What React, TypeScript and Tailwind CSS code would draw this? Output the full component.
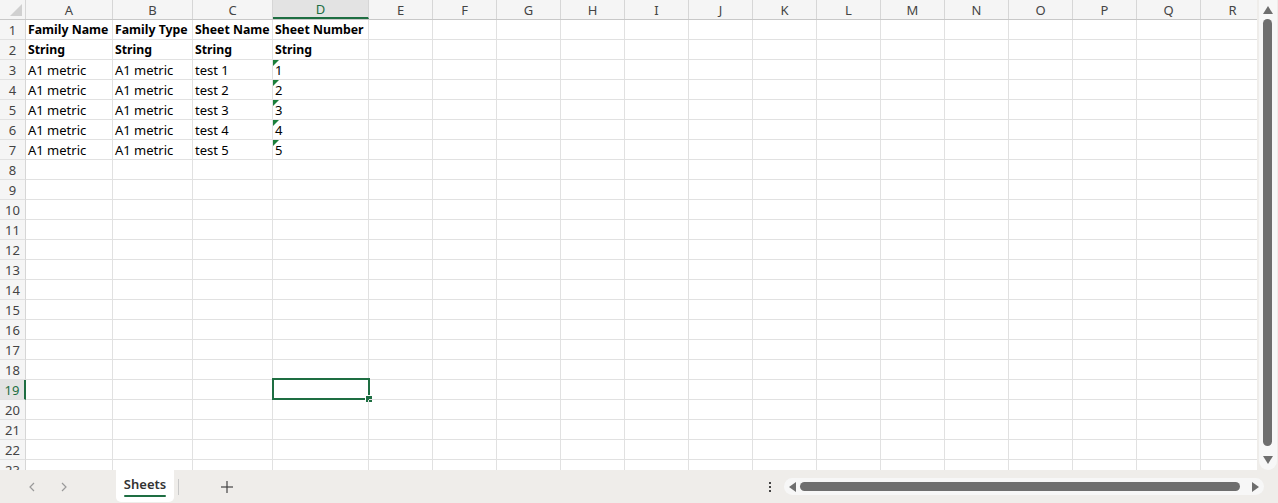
import React from 'react'

const cols = [
  { key: 'A', w: 'w-[87px]' },
  { key: 'B', w: 'w-[80px]' },
  { key: 'C', w: 'w-[80px]' },
  { key: 'D', w: 'w-[96px]' },
  ...'EFGHIJKLMNOPQR'.split('').map((k) => ({ key: k, w: 'w-[64px]' })),
]

const data: Record<number, string[]> = {
  1: ['Family Name', 'Family Type', 'Sheet Name', 'Sheet Number'],
  2: ['String', 'String', 'String', 'String'],
  3: ['A1 metric', 'A1 metric', 'test 1', '1'],
  4: ['A1 metric', 'A1 metric', 'test 2', '2'],
  5: ['A1 metric', 'A1 metric', 'test 3', '3'],
  6: ['A1 metric', 'A1 metric', 'test 4', '4'],
  7: ['A1 metric', 'A1 metric', 'test 5', '5'],
}

const rows = Array.from({ length: 23 }, (_, i) => i + 1)

function HeaderRow() {
  return (
    <div className="flex h-[20px] shrink-0 bg-[#f5f5f5] border-b border-[#c8c8c8]">
      <div className="relative w-[26px] shrink-0 border-r border-[#d6d6d6]">
        <svg className="absolute right-[3px] bottom-[3px]" width="12" height="12" viewBox="0 0 12 12">
          <polygon points="12,0 12,12 0,12" fill="#d0d0d0" />
        </svg>
      </div>
      {cols.map((c) => (
        <div
          key={c.key}
          className={`${c.w} shrink-0 flex items-center justify-center pt-[2px] border-r border-[#d6d6d6] text-[13px] ${
            c.key === 'D' ? 'bg-[#e3e3e3] border-b-2 border-b-[#1e6e42] text-[#1e6e42]' : 'text-[#444]'
          }`}
        >
          {c.key}
        </div>
      ))}
    </div>
  )
}

function Row({ n }: { n: number }) {
  const values = data[n] || []
  const selectedRow = n === 19
  return (
    <div className="flex h-[20px] shrink-0">
      <div
        className={`w-[26px] shrink-0 flex items-center justify-center pt-[2px] text-[13px] border-b border-[#e1e1e1] ${
          selectedRow
            ? 'bg-[#e3e3e3] text-[#1e6e42] border-r-2 border-r-[#1e6e42]'
            : 'bg-[#f5f5f5] text-[#444] border-r border-r-[#d6d6d6]'
        }`}
      >
        {n}
      </div>
      {cols.map((c, i) => {
        const v = values[i]
        const bold = n <= 2
        return (
          <div
            key={c.key}
            className={`${c.w} shrink-0 relative flex items-center pl-[2px] pt-[2px] border-r border-b border-[#e1e1e1] text-black whitespace-nowrap ${
              bold ? 'font-bold text-[12.3px]' : 'text-[13px]'
            }`}
          >
            {c.key === 'D' && n >= 3 && n <= 7 && (
              <svg className="absolute left-0 top-0" width="6" height="6" viewBox="0 0 6 6">
                <polygon points="0,0 6,0 0,6" fill="#1b7f3a" />
              </svg>
            )}
            {v}
            {c.key === 'D' && selectedRow && (
              <div className="absolute left-[-1px] top-[-2px] w-[98px] h-[22px] border-2 border-[#1e6e42]">
                <div className="absolute right-[-5px] bottom-[-5px] w-[6px] h-[6px] bg-[#1e6e42] border border-white box-content" />
              </div>
            )}
          </div>
        )
      })}
    </div>
  )
}

function VScroll() {
  return (
    <div className="w-[21px] shrink-0 bg-[#efedea] flex justify-center">
      <div className="w-[18px] h-full bg-[#f7f7f7] rounded-b-full flex flex-col items-center pt-[6px] pb-[6px]">
        <svg width="10" height="8" viewBox="0 0 10 8">
          <polygon points="5,0 10,8 0,8" fill="#6e6e6e" />
        </svg>
        <div className="w-[9px] flex-1 mt-[5px] mb-[10px] bg-[#6e6e6e] rounded-full" />
        <svg width="10" height="8" viewBox="0 0 10 8">
          <polygon points="0,0 10,0 5,8" fill="#6e6e6e" />
        </svg>
      </div>
    </div>
  )
}

function BottomBar() {
  return (
    <div className="h-[33px] shrink-0 bg-[#efedea] flex items-stretch text-[#555]">
      <div className="w-[116px] shrink-0 flex items-center pl-[26px] gap-[20px]">
        <svg width="12" height="12" viewBox="0 0 12 12" fill="none" stroke="#9a9a9a" strokeWidth="1.2">
          <polyline points="8,2 4,6 8,10" />
        </svg>
        <svg width="12" height="12" viewBox="0 0 12 12" fill="none" stroke="#9a9a9a" strokeWidth="1.2">
          <polyline points="4,2 8,6 4,10" />
        </svg>
      </div>
      <div className="w-[58px] shrink-0 bg-white rounded-b-[5px] flex flex-col items-center justify-center mb-[1px]">
        <span className="text-[13px] font-semibold text-[#333] leading-[16px]">Sheets</span>
        <div className="w-[42px] h-[2px] bg-[#1e6e42] mt-[3px] rounded-full" />
      </div>
      <div className="w-px h-[16px] bg-[#c8c8c8] self-center ml-[4px]" />
      <div className="flex items-center ml-[41px]">
        <svg width="14" height="14" viewBox="0 0 14 14" stroke="#444" strokeWidth="1.2">
          <line x1="7" y1="1" x2="7" y2="13" />
          <line x1="1" y1="7" x2="13" y2="7" />
        </svg>
      </div>
      <div className="flex-1" />
      <div className="flex items-center mr-[12px]">
        <svg width="4" height="14" viewBox="0 0 4 14" fill="#444">
          <rect x="1" y="2" width="2" height="2" />
          <rect x="1" y="6" width="2" height="2" />
          <rect x="1" y="10" width="2" height="2" />
        </svg>
      </div>
      <div className="flex items-center mr-[14px]">
        <div className="w-[480px] h-[17px] bg-[#f7f7f7] rounded-full flex items-center px-[5px] gap-[4px]">
          <svg width="7" height="10" viewBox="0 0 7 10">
            <polygon points="7,0 7,10 0,5" fill="#6e6e6e" />
          </svg>
          <div className="flex-1 h-[9px] bg-[#6e6e6e] rounded-full mr-[8px]" />
          <svg width="7" height="10" viewBox="0 0 7 10">
            <polygon points="0,0 7,5 0,10" fill="#6e6e6e" />
          </svg>
        </div>
      </div>
    </div>
  )
}

export default function App() {
  return (
    <div className="w-[1278px] h-[503px] overflow-hidden flex flex-col bg-white" style={{ fontFamily: '"Noto Sans", "Liberation Sans", sans-serif' }}>
      <div className="flex h-[470px] shrink-0">
        <div className="flex-1 overflow-hidden flex flex-col">
          <HeaderRow />
          {rows.map((n) => (
            <Row key={n} n={n} />
          ))}
        </div>
        <VScroll />
      </div>
      <BottomBar />
    </div>
  )
}
